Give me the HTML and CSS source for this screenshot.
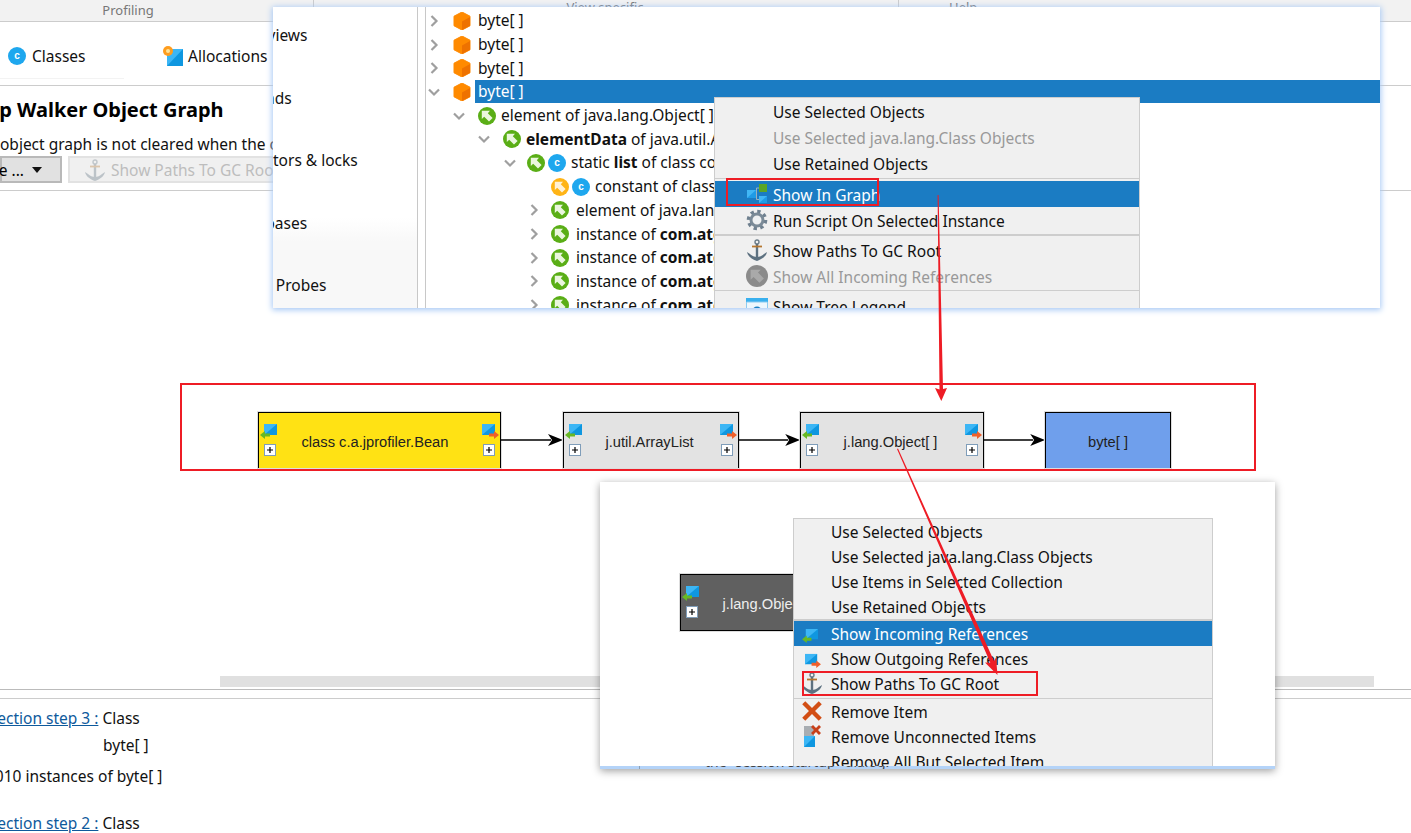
FILE: index.html
```html
<!DOCTYPE html>
<html lang="en" dir="ltr">
  <head>
    <meta charset="utf-8">
    <title>Heap Walker Object Graph</title>
    <link rel="stylesheet" href="styles.css">
  </head>
  <body>
    <!-- shared icons -->
    <svg class="defs" width="0" height="0">
      <symbol id="i-cube" viewBox="0 0 18 18">
        <path d="M9 0L17 4.2V13.8L9 18L1 13.8V4.2Z" fill="#ff8a00" stroke="#ff8a00" stroke-linejoin="round"/>
        <path d="M9 9.5L17 5V13.8L9 18Z" fill="#ee7200"/>
      </symbol>
      <symbol id="i-ref" viewBox="0 0 18 18">
        <circle cx="9" cy="9" r="9" fill="#5aae16"/>
        <path d="M3.8 3.8H12L9.8 6.2L14.6 11L11 14.6L6.2 9.8L3.8 12Z" fill="#eaf6de"/>
      </symbol>
      <symbol id="i-ref-orange" viewBox="0 0 18 18">
        <circle cx="9" cy="9" r="9" fill="#ffb416"/>
        <path d="M3.8 3.8H12L9.8 6.2L14.6 11L11 14.6L6.2 9.8L3.8 12Z" fill="#fff1d6"/>
      </symbol>
      <symbol id="i-ref-gray" viewBox="0 0 18 18">
        <circle cx="9" cy="9" r="9" fill="#8b8b8b"/>
        <path d="M3.8 3.8H12L9.8 6.2L14.6 11L11 14.6L6.2 9.8L3.8 12Z" fill="#a9a9a9"/>
      </symbol>
      <symbol id="i-class" viewBox="0 0 18 18">
        <circle cx="9" cy="9" r="9" fill="#1ea7ee"/>
        <text x="9" y="12.2" text-anchor="middle" font-family="Liberation Sans" font-weight="700" font-size="10" fill="#fff">c</text>
      </symbol>
      <symbol id="i-in" viewBox="0 0 18 16">
        <path d="M4 1H17V12H4Z" fill="#0f97e0"/>
        <path d="M4 12V1H17Z" fill="#3cb6f5"/>
        <path d="M0 12L5 8V10.500H10V13.500H5V16Z" fill="#68b825"/>
      </symbol>
      <symbol id="i-out" viewBox="0 0 18 16">
        <path d="M1 1H14V12H1Z" fill="#0f97e0"/>
        <path d="M1 12V1H14Z" fill="#3cb6f5"/>
        <path d="M18 12L13 8V10.500H8V13.500H13V16Z" fill="#f0602a"/>
      </symbol>
      <symbol id="i-plus" viewBox="0 0 12 12">
        <rect x=".5" y=".5" width="11" height="11" fill="#fff" stroke="#7f9db9"/>
        <path d="M3 6H9M6 3V9" stroke="#000" stroke-width="1.2"/>
      </symbol>
      <symbol id="i-anchor" viewBox="0 0 22 22">
        <circle cx="11" cy="3" r="2" fill="none" stroke="#6b7c88" stroke-width="1.4"/>
        <path d="M11 5V20" stroke="#5d7180" stroke-width="2.400"/>
        <path d="M6 7.500H16" stroke="#b5762f" stroke-width="1.800"/>
        <path d="M1 13C2 18 7 20.500 11 22C15 20.500 20 18 21 13L18 15C16 17 13.500 18 11 18C8.500 18 6 17 4 15Z" fill="#5d7180"/>
      </symbol>
      <symbol id="i-gear" viewBox="0 0 22 22">
        <circle cx="11" cy="11" r="8.500" fill="none" stroke="#6f808f" stroke-width="3.600" stroke-dasharray="3.300 3.370"/>
        <circle cx="11" cy="11" r="6" fill="none" stroke="#7a8a97" stroke-width="3"/>
        <circle cx="11" cy="11" r="3.500" fill="#eef1f3"/>
      </symbol>
      <symbol id="i-graph" viewBox="0 0 22 22">
        <path d="M13 5H10.500V16.500H13" fill="none" stroke="#9ab0bd"/>
        <path d="M13 1H21V9H13Z" fill="#5aa528"/>
        <path d="M1 7H10V15H1Z" fill="#1e9be6"/>
        <path d="M1 15V7H10Z" fill="#41b7f5"/>
        <path d="M13 13H21V20H13Z" fill="#1e9be6"/>
        <path d="M13 20V13H21Z" fill="#41b7f5"/>
      </symbol>
      <symbol id="i-remove" viewBox="0 0 18 18">
        <path d="M1 3.500L3.500 1L9 6.500L14.500 1L17 3.500L11.500 9L17 14.500L14.500 17L9 11.500L3.500 17L1 14.500L6.500 9Z" fill="#d24e14"/>
      </symbol>
      <symbol id="i-unconnected" viewBox="0 0 18 22">
        <path d="M1 1H11V11H1Z" fill="#a8adb2"/>
        <path d="M1 11H12V22H1Z" fill="#0f97e0"/>
        <path d="M1 22V11H12Z" fill="#3cb6f5"/>
        <path d="M8 2L10 0L13 3L16 0L18 2L15 5L18 8L16 10L13 7L10 10L8 8L11 5Z" fill="#c8401a"/>
      </symbol>
      <symbol id="i-legend" viewBox="0 0 22 22">
        <path d="M0 0H22V4H0Z" fill="#39b0ee"/>
        <path d="M.5 4H21.500V20H.5Z" fill="#eef7fd" stroke="#8ccbf0"/>
        <circle cx="11" cy="13" r="4.500" fill="#1a7fc4"/>
      </symbol>
      <symbol id="i-alloc" viewBox="0 0 20 20">
        <path d="M4 3H20V20H4Z" fill="#0f97e0"/>
        <path d="M4 20V3H20Z" fill="#3cb6f5"/>
        <circle cx="5" cy="5" r="5" fill="#ff9d1e"/>
        <circle cx="5" cy="5" r="2" fill="#ffe49a"/>
      </symbol>
      <symbol id="i-right" viewBox="0 0 12 12">
        <path d="M3.500 1L8.500 6L3.500 11" fill="none" stroke="#9f9f9f" stroke-width="2.200"/>
      </symbol>
      <symbol id="i-down" viewBox="0 0 12 12">
        <path d="M1 3.500L6 8.500L11 3.500" fill="none" stroke="#9f9f9f" stroke-width="2.200"/>
      </symbol>
      <symbol id="i-edge" viewBox="0 0 62 14">
        <path d="M0 7H50" stroke="#000" stroke-width="1.300"/>
        <path d="M62 7L47 1L51 7L47 13Z" fill="#000"/>
      </symbol>
    </svg>

    <!-- the application behind the pasted crops -->
    <div class="app">
      <div class="ribbon">
        <div class="ribbon-part part-profiling">Profiling</div>
        <div class="ribbon-part part-view">View specific</div>
        <div class="ribbon-part part-help">Help</div>
      </div>
      <div class="tabs">
        <div class="tab tab-classes"><svg class="ic18"><use href="#i-class"/></svg>Classes</div>
        <div class="tab"><svg class="ic20"><use href="#i-alloc"/></svg>Allocations</div>
      </div>
      <div class="page-head">
        <h1 class="page-title">Heap Walker Object Graph</h1>
        <p class="page-note">The object graph is not cleared when the c</p>
        <div class="toolbar">
          <button class="btn btn-more">More ... <span class="caret"></span></button>
          <button class="btn btn-off"><svg class="ic22"><use href="#i-anchor"/></svg>Show Paths To GC Root</button>
        </div>
      </div>
      <div class="graph-area">
        <div class="hscroll"></div>
      </div>
      <div class="steps">
        <div class="step"><a class="step-link">Selection step 3 :</a><span>Class</span></div>
        <div class="step step-sub">byte[ ]</div>
        <div class="step-count">3010 instances of byte[ ]</div>
        <div class="step step-next"><a class="step-link">Selection step 2 :</a><span>Class</span></div>
      </div>
    </div>

    <!-- crop 1: heap walker tree with its context menu -->
    <div class="window window-tree">
      <div class="nav">
        <div class="nav-item nav-views">CPU views</div>
        <div class="nav-item nav-threads">Threads</div>
        <div class="nav-item nav-monitors">Monitors &amp; locks</div>
        <div class="nav-item nav-bases">Databases</div>
        <div class="nav-item nav-probes">JEE &amp; Probes</div>
      </div>
      <div class="tree">
        <div class="row"><svg class="chev"><use href="#i-right"/></svg><svg class="ic18 cube"><use href="#i-cube"/></svg><span class="name">byte[ ]</span></div>
        <div class="row"><svg class="chev"><use href="#i-right"/></svg><svg class="ic18 cube"><use href="#i-cube"/></svg><span class="name">byte[ ]</span></div>
        <div class="row"><svg class="chev"><use href="#i-right"/></svg><svg class="ic18 cube"><use href="#i-cube"/></svg><span class="name">byte[ ]</span></div>
        <div class="row"><svg class="chev"><use href="#i-down"/></svg><svg class="ic18 cube"><use href="#i-cube"/></svg><span class="name name-on">byte[ ]</span></div>
        <div class="row lv1"><svg class="chev"><use href="#i-down"/></svg><svg class="ic18"><use href="#i-ref"/></svg><span class="name">element of java.lang.Object[ ]</span></div>
        <div class="row lv2"><svg class="chev"><use href="#i-down"/></svg><svg class="ic18"><use href="#i-ref"/></svg><span class="name"><b>elementData</b> of java.util.ArrayList</span></div>
        <div class="row lv3"><svg class="chev"><use href="#i-down"/></svg><svg class="ic18"><use href="#i-ref"/></svg><svg class="ic18 ic-next"><use href="#i-class"/></svg><span class="name"><span>static </span><b>list</b> of class com.atg</span></div>
        <div class="row lv4"><span class="chev"></span><svg class="ic18"><use href="#i-ref-orange"/></svg><svg class="ic18 ic-next"><use href="#i-class"/></svg><span class="name">constant of class</span></div>
        <div class="row lv4"><svg class="chev"><use href="#i-right"/></svg><svg class="ic18"><use href="#i-ref"/></svg><span class="name name-wide">element of java.lang.Object</span></div>
        <div class="row lv4"><svg class="chev"><use href="#i-right"/></svg><svg class="ic18"><use href="#i-ref"/></svg><span class="name name-wide">instance of <b>com.atg.Bean</b></span></div>
        <div class="row lv4"><svg class="chev"><use href="#i-right"/></svg><svg class="ic18"><use href="#i-ref"/></svg><span class="name name-wide">instance of <b>com.atg.Bean</b></span></div>
        <div class="row lv4"><svg class="chev"><use href="#i-right"/></svg><svg class="ic18"><use href="#i-ref"/></svg><span class="name name-wide">instance of <b>com.atg.Bean</b></span></div>
        <div class="row lv4"><svg class="chev"><use href="#i-right"/></svg><svg class="ic18"><use href="#i-ref"/></svg><span class="name name-wide">instance of <b>com.atg.Bean</b></span></div>
      </div>
      <div class="menu menu-tree">
        <div class="item">Use Selected Objects</div>
        <div class="item item-off">Use Selected java.lang.Class Objects</div>
        <div class="item">Use Retained Objects</div>
        <div class="sep sep-first"></div>
        <div class="item item-on"><svg class="item-ic"><use href="#i-graph"/></svg>Show In Graph</div>
        <div class="item"><svg class="item-ic"><use href="#i-gear"/></svg>Run Script On Selected Instance</div>
        <div class="sep sep-thick"></div>
        <div class="item"><svg class="item-ic"><use href="#i-anchor"/></svg>Show Paths To GC Root</div>
        <div class="item item-off"><svg class="item-ic"><use href="#i-ref-gray"/></svg>Show All Incoming References</div>
        <div class="sep"></div>
        <div class="item"><svg class="item-ic ic-legend"><use href="#i-legend"/></svg>Show Tree Legend</div>
      </div>
    </div>

    <!-- crop 2: reference chain -->
    <div class="chain">
      <div class="node node-yellow">
        <div class="node-side"><svg class="node-ic"><use href="#i-in"/></svg><svg class="plus"><use href="#i-plus"/></svg></div>
        <div class="node-label">class c.a.jprofiler.Bean</div>
        <div class="node-side side-right"><svg class="node-ic"><use href="#i-out"/></svg><svg class="plus"><use href="#i-plus"/></svg></div>
      </div>
      <svg class="edge"><use href="#i-edge"/></svg>
      <div class="node node-list">
        <div class="node-side"><svg class="node-ic"><use href="#i-in"/></svg><svg class="plus"><use href="#i-plus"/></svg></div>
        <div class="node-label">j.util.ArrayList</div>
        <div class="node-side side-right"><svg class="node-ic"><use href="#i-out"/></svg><svg class="plus"><use href="#i-plus"/></svg></div>
      </div>
      <svg class="edge edge-short"><use href="#i-edge"/></svg>
      <div class="node node-array">
        <div class="node-side"><svg class="node-ic"><use href="#i-in"/></svg><svg class="plus"><use href="#i-plus"/></svg></div>
        <div class="node-label">j.lang.Object[ ]</div>
        <div class="node-side side-right"><svg class="node-ic"><use href="#i-out"/></svg><svg class="plus"><use href="#i-plus"/></svg></div>
      </div>
      <svg class="edge edge-short"><use href="#i-edge"/></svg>
      <div class="node node-blue">
        <div class="node-label">byte[ ]</div>
      </div>
    </div>

    <!-- crop 3: graph context menu -->
    <div class="window window-graph">
      <div class="graph-body">
        <div class="node node-dark">
          <div class="node-side"><svg class="node-ic"><use href="#i-in"/></svg><svg class="plus"><use href="#i-plus"/></svg></div>
          <div class="node-label">j.lang.Object[ ]</div>
        </div>
        <div class="menu menu-graph">
          <div class="item">Use Selected Objects</div>
          <div class="item">Use Selected java.lang.Class Objects</div>
          <div class="item">Use Items in Selected Collection</div>
          <div class="item">Use Retained Objects</div>
          <div class="sep sep-thick"></div>
          <div class="item item-on"><svg class="item-ic ic-small"><use href="#i-in"/></svg>Show Incoming References</div>
          <div class="item"><svg class="item-ic ic-small ic-out"><use href="#i-out"/></svg>Show Outgoing References</div>
          <div class="item"><svg class="item-ic"><use href="#i-anchor"/></svg>Show Paths To GC Root</div>
          <div class="sep"></div>
          <div class="item"><svg class="item-ic"><use href="#i-remove"/></svg>Remove Item</div>
          <div class="item"><svg class="item-ic"><use href="#i-unconnected"/></svg>Remove Unconnected Items</div>
          <div class="item">Remove All But Selected Item</div>
        </div>
      </div>
      <div class="window-edge"><span>the "session startup" dialog.</span></div>
    </div>

    <!-- red annotations -->
    <svg class="marks" width="1411" height="833">
      <rect x="727" y="179" width="151" height="26"/>
      <rect x="803" y="672" width="234" height="23"/>
      <path class="arrow" d="M937.600 195H938.600L943 389L947 388L941.300 401L935 388L939.500 389.500Z"/>
      <path class="arrow" d="M897 449L898 448.600L994 661L996 657.500L997.500 675L985 662.400L990.300 662.800Z"/>
    </svg>
  </body>
</html>
```

FILE: styles.css
```css
*{
  box-sizing: border-box;
}
html, body{
  margin: 0;
  height: 100%;
}
body{
  width: 1411px;
  height: 833px;
  overflow: hidden;
  position: relative;
  background-color: white;
  font-family: "Noto Sans", sans-serif;
  font-size: 15.5px;
  color: #111;
}
.defs{
  position: absolute;
}
svg{
  display: block;
  flex: none;
}

/* application behind the crops */
.app{
  height: 833px;
  display: flex;
  flex-direction: column;
  overflow: hidden;
}
.app > div{
  flex: none;
}
.ribbon{
  height: 22px;
  display: flex;
  background-color: #f2f2f2;
  border-bottom: 1px solid #ccc;
  font-size: 13px;
  color: #777;
  text-align: center;
}
.ribbon-part{
  border-right: 1px solid #ccc;
  line-height: 20px;
}
.part-profiling{
  width: 314px;
  padding-right: 57px;
}
.part-view{
  width: 585px;
  line-height: 14px;
  padding-right: 2px;
}
.part-help{
  flex: 1;
  border-right: none;
  line-height: 14px;
  text-align: left;
  padding-left: 50px;
}
.tabs{
  height: 64px;
  display: flex;
  align-items: flex-start;
  padding-top: 23px;
  border-bottom: 1px solid #ccc;
}
.tab{
  display: flex;
  align-items: center;
  gap: 7px;
  height: 21px;
}
.tab-classes{
  width: 163px;
  padding-left: 8px;
  gap: 6px;
}
.tab-classes::after{
  content: "";
  position: absolute;
  left: 0;
  top: 78px;
  width: 124px;
  height: 1px;
  background-color: #f3f3f3;
}
.ic18{
  width: 18px;
  height: 18px;
}
.ic20{
  width: 20px;
  height: 20px;
  margin-right: -2px;
}
.ic22{
  width: 22px;
  height: 22px;
}
.page-head{
  height: 105px;
  border-bottom: 1px solid #ccc;
}
.page-title{
  margin: 10px 0 0 -40px;
  font-size: 20px;
  line-height: 27px;
  font-weight: 700;
  color: black;
}
.page-note{
  margin: 11px 0 0 -31px;
  line-height: 20px;
  white-space: nowrap;
}
.toolbar{
  display: flex;
  gap: 6px;
  margin-top: 2px;
}
.btn{
  height: 27px;
  font: inherit;
  padding: 0;
  display: flex;
  align-items: center;
  white-space: nowrap;
}
.btn-more{
  width: 62px;
  justify-content: flex-end;
  padding-right: 36px;
  background-color: #e1e1e1;
  border: 2px solid #b9b9b9;
  position: relative;
}
.caret{
  position: absolute;
  right: 18px;
  top: 9px;
  width: 0;
  height: 0;
  border-left: 5px solid transparent;
  border-right: 5px solid transparent;
  border-top: 6px solid #111;
}
.btn-off{
  width: 240px;
  padding-left: 14px;
  gap: 5px;
  background-color: #f0f0f0;
  border: 2px solid #e2e2e2;
  color: #bdbdbd;
}
.btn-off svg{
  opacity: .35;
}
.graph-area{
  height: 499px;
  padding: 485px 37px 0 220px;
  border-bottom: 1px solid #bbb;
}
.hscroll{
  height: 11px;
  background-color: #e0e0e0;
}
.steps{
  margin-top: 8px;
  border-top: 1px solid #ccc;
  padding-top: 9px;
  line-height: 20px;
}
.step{
  display: flex;
  gap: 4px;
  white-space: nowrap;
  margin-left: -24px;
}
.step-link{
  color: #0e5a9c;
  text-decoration: underline;
}
.step-sub{
  margin-left: 103px;
  margin-top: 7px;
}
.step-count{
  margin-left: -14px;
  margin-top: 11px;
}
.step-next{
  margin-top: 27px;
}

/* crop windows */
.window{
  position: absolute;
  background-color: white;
  overflow: hidden;
}
.window-tree{
  left: 273px;
  top: 7px;
  width: 1107px;
  height: 301px;
  display: flex;
  overflow: visible;
  box-shadow: 0 1px 6px 1px #a6c8f5;
}
.nav{
  width: 145px;
  height: 301px;
  overflow: hidden;
  border-right: 1px solid #c8c8c8;
  padding-top: 18px;
  background: linear-gradient(white 70%, #f8f8f8 78%);
  white-space: nowrap;
}
.nav-item{
  height: 62.500px;
  line-height: 20px;
}
.nav-views{
  margin-left: -40px;
}
.nav-threads{
  margin-left: -40px;
}
.nav-monitors{
  margin-left: -37px;
}
.nav-bases{
  margin-left: -42px;
}
.nav-probes{
  margin-left: -38px;
}
.tree{
  flex: 1;
  margin-left: 7px;
  border-left: 1px solid #c8c8c8;
  padding-top: 2px;
  overflow: hidden;
  height: 301px;
}
.row{
  height: 23.700px;
  display: flex;
  align-items: center;
  padding-left: 2px;
  white-space: nowrap;
}
.chev{
  width: 12px;
  height: 12px;
  margin-right: 13px;
}
.cube{
  margin-right: 4px;
}
.name{
  padding: 0 0 0 3px;
  line-height: 23px;
}
.name-on{
  flex: 1;
  background-color: #1b7cc3;
  color: white;
}
.lv1{
  padding-left: 27px;
}
.lv1 .name, .lv2 .name, .lv3 .name, .lv4 .name{
  padding-left: 5px;
}
.lv2{
  padding-left: 52px;
}
.lv3{
  padding-left: 78px;
}
.lv4{
  padding-left: 102px;
}
.lv3 .chev, .lv4 .chev{
  margin-right: 11px;
}
.ic-next{
  margin-left: 3px;
}
.name-wide{
  padding-left: 7px !important;
}
.menu{
  background-color: #f0f0f0;
  border: 1px solid #cdcdcd;
  overflow: hidden;
  white-space: nowrap;
}
.menu-tree{
  position: absolute;
  left: 441px;
  top: 90px;
  width: 426px;
  height: 211px;
  border-bottom: none;
}
.menu-tree .item{
  height: 26px;
  padding: 2px 0 0 58px;
}
.menu-tree .item-ic{
  left: 31px;
}
.menu-tree .sep-first{
  height: 5px;
  padding-top: 2px;
}
.menu-tree .ic-legend{
  top: 5px;
}
.item{
  position: relative;
  display: flex;
  align-items: center;
}
.item-ic{
  position: absolute;
  width: 22px;
  height: 22px;
  top: 2px;
}
.item-off{
  color: #999;
}
.item-on{
  background-color: #1b7cc3;
  color: white;
}
.sep{
  height: 4px;
  padding-top: 1px;
}
.sep::after{
  content: "";
  display: block;
  height: 1px;
  background-color: #cdcdcd;
}
.sep-thick::after{
  height: 2px;
}

/* reference chain */
.chain{
  position: absolute;
  left: 180px;
  top: 383px;
  width: 1076px;
  height: 88px;
  border: 2px solid #ee1c25;
  padding: 27px 0 0 76px;
  display: flex;
  align-items: flex-start;
}
.node{
  height: 56px;
  display: flex;
  border: 1px solid black;
  border-bottom: none;
  box-shadow: 0 0 0 1px #ddd;
  font-family: "Liberation Sans", sans-serif;
  font-size: 14.700px;
  color: #222;
}
.node-yellow{
  width: 243px;
  background-color: #ffe214;
}
.node-list{
  width: 176px;
  background-color: #e3e3e3;
}
.node-array{
  width: 184px;
  background-color: #e3e3e3;
}
.node-blue{
  width: 126px;
  background-color: #6f9fec;
}
.node-side{
  width: 22px;
  flex: none;
  padding: 10px 0 0 1px;
}
.side-right{
  padding-left: 3px;
}
.node-ic{
  width: 18px;
  height: 16px;
}
.plus{
  width: 12px;
  height: 12px;
  margin: 5px 0 0 4px;
}
.side-right .plus{
  margin-left: 2px;
}
.node-label{
  flex: 1;
  text-align: center;
  line-height: 58px;
  white-space: nowrap;
  overflow: hidden;
  padding-right: 3px;
}
.node-yellow .node-label{
  padding-right: 9px;
}
.node-blue .node-label{
  padding-right: 0;
}
.edge{
  width: 62px;
  height: 14px;
  margin-top: 21px;
}
.edge-short{
  width: 61px;
}

/* graph crop */
.window-graph{
  left: 600px;
  top: 482px;
  width: 675px;
  height: 287px;
  display: flex;
  flex-direction: column;
  overflow: visible;
  box-shadow: 0 2px 8px rgba(0,0,0,.38);
}
.graph-body{
  flex: 1;
  position: relative;
  overflow: hidden;
}
.node-dark{
  position: absolute;
  left: 80px;
  top: 92px;
  width: 160px;
  height: 57px;
  background-color: #606060;
  border-bottom: 1px solid black;
  color: #eee;
}
.menu-graph{
  position: absolute;
  left: 193px;
  top: 36px;
  width: 420px;
  height: 260px;
}
.menu-graph .item{
  height: 25px;
  padding-left: 37px;
}
.menu-graph .sep{
  height: 3px;
  padding-top: 2px;
}
.menu-graph .sep-thick{
  height: 2px;
  padding-top: 0;
}
.menu-graph .item-ic{
  left: 7px;
  top: 1px;
}
.menu-graph .ic-small{
  left: 8px;
  top: 7px;
  width: 17px;
  height: 15px;
}
.menu-graph .ic-out{
  left: 10px;
}
.window-edge{
  height: 3px;
  overflow: hidden;
  background: linear-gradient(90deg, #b4d3f8 39px, #8aa0b8 39px, #8aa0b8 40px, #b4d3f8 40px);
  padding-left: 105px;
  font-size: 14px;
  color: #444;
  white-space: nowrap;
}
.window-edge span{
  display: block;
  margin-top: -14px;
  line-height: 20px;
}

/* red annotations */
.marks{
  position: absolute;
  left: 0;
  top: 0;
}
.marks rect{
  fill: none;
  stroke: #ee1c25;
  stroke-width: 2;
}
.marks .arrow{
  fill: #ee1c25;
}
```
